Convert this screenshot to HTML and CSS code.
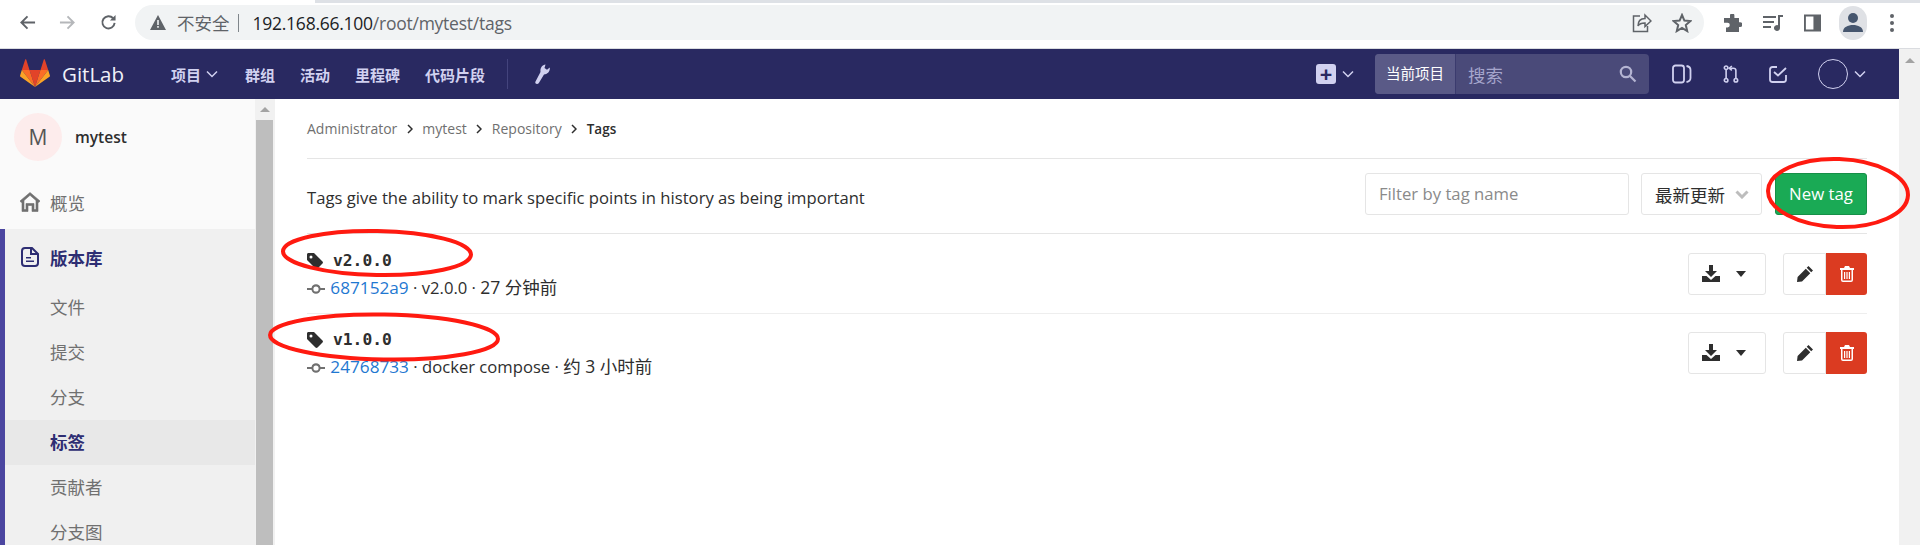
FILE: index.html
```html
<!doctype html>
<html lang="en">

<head>
  <meta charset="UTF-8" />
  <title>Tags · mytest</title>
  <link rel="stylesheet" href="styles.css">
</head>

<body>
  <div class="tab-strip">
    <div class="tab-active"></div>
  </div>

  <div class="toolbar">
    <svg class="tool-icon back" viewBox="0 0 18 18"><path d="M17 9H3M9 2.5 2.5 9 9 15.5" /></svg>
    <svg class="tool-icon forward" viewBox="0 0 18 18"><path d="M1 9h14M9 2.5 15.5 9 9 15.5" /></svg>
    <svg class="tool-icon reload" viewBox="0 0 18 18"><path d="M15.5 9.5a6.5 6.5 0 1 1-1.6-5" /><path class="solid" d="M16.5 1v6h-6z" /></svg>

    <div class="omnibox">
      <svg class="alert-icon" viewBox="0 0 16 15"><path d="M8 0 16 15H0z" /><path class="cut" d="M7.2 5h1.6v5H7.2zM7.2 11h1.6v1.8H7.2z" /></svg>
      <span class="not-secure">不安全</span>
      <span class="omni-sep"></span>
      <span class="url"><b>192.168.66.100</b>/root/mytest/tags</span>
      <svg class="omni-icon share" viewBox="0 0 20 20"><path d="M8 3H1.5v15.500h14V13M6 13c0-5 3-7.500 7-7.500V2l6 6-6 5.500V10c-3 0-5.500 0-7 3z" /></svg>
      <svg class="omni-icon star" viewBox="0 0 20 20"><path d="M10 2l2.400 5.600 6 .5-4.600 4 1.400 6L10 15l-5.200 3.100 1.400-6-4.600-4 6-.5z" /></svg>
    </div>

    <svg class="ext-icon puzzle" viewBox="0 0 18 18"><path d="M6 1.500a2.200 2.200 0 0 1 4.400 0V4H15v4.300h1.200a2.300 2.300 0 0 1 0 4.600H15V18H2v-4.600h1.500a2.300 2.300 0 0 0 0-4.600H0V4h6z" /></svg>
    <svg class="ext-icon music" viewBox="0 0 20 18"><path d="M0 2h13v2H0zM0 7h11v2H0zM0 12h8v2H0zM15 1h5v2h-3v11a3 3 0 1 1-2-2.800z" /></svg>
    <svg class="ext-icon panel" viewBox="0 0 18 18"><path fill-rule="evenodd" d="M0 0h18v18H0zM2 2v14h8V2z" /></svg>
    <div class="profile">
      <svg viewBox="0 0 28 34"><circle cx="14" cy="12" r="5" /><path d="M4 26c0-5 5-7 10-7s10 2 10 7z" /></svg>
    </div>
    <div class="menu-dots"><i></i><i></i><i></i></div>
  </div>

  <div class="viewport">
    <div class="page">
      <header class="navbar">
        <svg class="logo" viewBox="0 0 30 28">
          <path fill="#e24329" d="M15 28 9.500 11h11z" />
          <path fill="#fc6d26" d="M15 28 9.500 11H1.800zM15 28l5.500-17h7.700z" />
          <path fill="#fca326" d="M1.800 11 .1 16.500c-.2.500 0 1 .4 1.300L15 28zM28.200 11l1.700 5.500c.2.500 0 1-.4 1.300L15 28z" />
          <path fill="#e24329" d="M1.800 11H9.500L6.200.5c-.2-.500-.8-.500-1 0zM28.200 11H20.500L23.800.5c.2-.500.8-.500 1 0z" />
        </svg>
        <span class="brand">GitLab</span>

        <ul class="nav-links">
          <li class="nav-project">项目 <svg class="chev" viewBox="0 0 12 8"><path d="M1 1.500 6 6.500l5-5" /></svg></li>
          <li>群组</li>
          <li>活动</li>
          <li>里程碑</li>
          <li>代码片段</li>
        </ul>
        <span class="nav-sep"></span>
        <svg class="wrench" viewBox="0 0 15 20"><path d="M2 20c-1.500 0-2-1-1.600-2.200L5.500 8C5 4 7 1 10.500.5L9.500 4 12 5.800l2.800-2.300C15.200 7.500 12.500 10.300 9 10.500L4 18.800C3.500 19.600 2.800 20 2 20z" /></svg>

        <div class="nav-right">
          <div class="plus-box">+</div>
          <svg class="chev plus-chev" viewBox="0 0 12 8"><path d="M1 1.500 6 6.500l5-5" /></svg>
          <div class="search">
            <span class="search-scope">当前项目</span>
            <span class="search-text">搜索</span>
            <svg class="search-icon" viewBox="0 0 18 18"><circle cx="7" cy="7" r="5.200" /><path d="M11 11l5.500 5.500" /></svg>
          </div>
          <svg class="nav-icon issues" viewBox="0 0 20 20"><rect x="1" y="1.500" width="11" height="17" rx="2.500" /><path d="M14.500 2c3 .5 4 2 4 4v8c0 2-1 3.500-4 4" /></svg>
          <svg class="nav-icon merge" viewBox="0 0 18 20"><circle cx="3.500" cy="3" r="2" /><circle cx="3.500" cy="17" r="2" /><circle cx="14.500" cy="17" r="2" /><path d="M3.500 5v10M14.500 15V6c0-1.500-1-2.500-3-2.500H8" /><path d="M10 1 7 3.500 10 6" /></svg>
          <svg class="nav-icon todo" viewBox="0 0 18 20"><path d="M8 3H3.500C2 3 1 4 1 5.500v10C1 17 2 18 3.500 18h11c1.500 0 2.500-1 2.500-2.500V11" /><path d="M5 8l4 3.500L17 4" /></svg>
          <div class="user-circle"></div>
          <svg class="chev user-chev" viewBox="0 0 12 8"><path d="M1 1.500 6 6.500l5-5" /></svg>
        </div>
      </header>

      <div class="layout">
        <aside class="sidebar">
          <div class="project-head">
            <div class="project-avatar">M</div>
            <span class="project-name">mytest</span>
          </div>
          <div class="side-row">
            <svg class="side-icon" viewBox="0 0 20 19"><path fill="#707070" stroke="#707070" stroke-width=".6" fill-rule="evenodd" d="M10 0 20 8.500 18.800 10 18 9.300V19H12v-6H8v6H2V9.300L1.200 10 0 8.500zM10 2.800 4 8v9h2v-6h8v6h2V8z" /></svg>
            概览
          </div>
          <div class="side-group">
            <div class="side-row group-title">
              <svg class="side-icon" viewBox="0 0 18 20"><path fill="none" stroke="#2e2e73" stroke-width="2" d="M4 1h7l6 6v9a3 3 0 0 1-3 3H4a3 3 0 0 1-3-3V4a3 3 0 0 1 3-3z" /><path fill="#2e2e73" d="M9 1h2v5h6v2H9zM5 10h5v1.500H5zM5 13.500h8V15H5z" /></svg>
              版本库
            </div>
            <div class="side-sub">文件</div>
            <div class="side-sub">提交</div>
            <div class="side-sub">分支</div>
            <div class="side-sub current">标签</div>
            <div class="side-sub">贡献者</div>
            <div class="side-sub">分支图</div>
          </div>
        </aside>

        <div class="side-scroll">
          <div class="side-scroll-arrow"></div>
          <div class="side-scroll-thumb"></div>
        </div>

        <main class="content">
          <nav class="breadcrumbs">
            <span>Administrator</span>
            <svg class="crumb-sep" viewBox="0 0 6 10"><path d="M1 1l4 4-4 4" /></svg>
            <span>mytest</span>
            <svg class="crumb-sep" viewBox="0 0 6 10"><path d="M1 1l4 4-4 4" /></svg>
            <span>Repository</span>
            <svg class="crumb-sep" viewBox="0 0 6 10"><path d="M1 1l4 4-4 4" /></svg>
            <span class="crumb-current">Tags</span>
          </nav>

          <div class="tags-top">
            <p class="tags-desc">Tags give the ability to mark specific points in history as being important</p>
            <div class="filter-input">Filter by tag name</div>
            <div class="sort-select">最新更新 <svg viewBox="0 0 14 9"><path d="M1.500 1.500 7 7l5.500-5.500" /></svg></div>
            <div class="btn-new">New tag</div>
          </div>

          <div class="tag-row">
            <div class="tag-info">
              <div class="tag-name">
                <svg class="tag-icon" viewBox="0 0 16 16"><path fill-rule="evenodd" d="M1.500 0H7l8.500 8.500c.6.600.6 1.400 0 2l-5 5c-.6.600-1.400.6-2 0L0 7V1.500C0 .6.600 0 1.500 0zM4 2.500a1.500 1.500 0 1 0 0 3 1.500 1.500 0 0 0 0-3z" /></svg>
                <span>v2.0.0</span>
              </div>
              <div class="tag-meta">
                <svg class="commit-icon" viewBox="0 0 18 10"><path d="M0 4h4.500a4.600 4.600 0 0 1 9 0H18v2h-4.500a4.600 4.600 0 0 1-9 0H0zM9 2.400a2.600 2.600 0 1 0 0 5.200 2.600 2.600 0 0 0 0-5.200z" fill-rule="evenodd" /></svg>
                <a class="sha">687152a9</a> · v2.0.0 · <span class="time-ago">27 分钟前</span>
              </div>
            </div>
            <div class="row-actions">
              <div class="btn-download">
                <svg class="dl-icon" viewBox="0 0 18 17"><path d="M7 0h4v6h4l-6 6-6-6h4zM0 11h4.500L9 15l4.500-4H18v6H0z" /></svg>
                <span class="caret"></span>
              </div>
              <div class="btn-edit"><svg viewBox="0 0 16 16"><path d="M11.500 0 16 4.500l-1.800 1.800-4.500-4.500zM8.800 2.800l4.500 4.500L5 15.500 0 16l.6-5z" /></svg></div>
              <div class="btn-delete"><svg viewBox="0 0 14 16"><path fill-rule="evenodd" d="M4 2 5 0h4l1 2h4v2h-1v10a2 2 0 0 1-2 2H3a2 2 0 0 1-2-2V4H0V2zM2.500 4v10c0 .4.200.6.500.6h8c.3 0 .5-.2.500-.6V4zM4 6h1.200v7H4zM6.400 6h1.200v7H6.400zM8.800 6H10v7H8.800z" /></svg></div>
            </div>
          </div>

          <div class="tag-row">
            <div class="tag-info">
              <div class="tag-name">
                <svg class="tag-icon" viewBox="0 0 16 16"><path fill-rule="evenodd" d="M1.500 0H7l8.500 8.500c.6.600.6 1.400 0 2l-5 5c-.6.600-1.400.6-2 0L0 7V1.500C0 .6.600 0 1.500 0zM4 2.500a1.500 1.500 0 1 0 0 3 1.500 1.500 0 0 0 0-3z" /></svg>
                <span>v1.0.0</span>
              </div>
              <div class="tag-meta">
                <svg class="commit-icon" viewBox="0 0 18 10"><path d="M0 4h4.500a4.600 4.600 0 0 1 9 0H18v2h-4.500a4.600 4.600 0 0 1-9 0H0zM9 2.400a2.600 2.600 0 1 0 0 5.200 2.600 2.600 0 0 0 0-5.200z" fill-rule="evenodd" /></svg>
                <a class="sha">24768733</a> · docker compose · <span class="time-ago">约 3 小时前</span>
              </div>
            </div>
            <div class="row-actions">
              <div class="btn-download">
                <svg class="dl-icon" viewBox="0 0 18 17"><path d="M7 0h4v6h4l-6 6-6-6h4zM0 11h4.500L9 15l4.500-4H18v6H0z" /></svg>
                <span class="caret"></span>
              </div>
              <div class="btn-edit"><svg viewBox="0 0 16 16"><path d="M11.500 0 16 4.500l-1.800 1.800-4.500-4.500zM8.800 2.800l4.500 4.500L5 15.500 0 16l.6-5z" /></svg></div>
              <div class="btn-delete"><svg viewBox="0 0 14 16"><path fill-rule="evenodd" d="M4 2 5 0h4l1 2h4v2h-1v10a2 2 0 0 1-2 2H3a2 2 0 0 1-2-2V4H0V2zM2.500 4v10c0 .4.200.6.500.6h8c.3 0 .5-.2.500-.6V4zM4 6h1.200v7H4zM6.400 6h1.200v7H6.400zM8.800 6H10v7H8.800z" /></svg></div>
            </div>
          </div>
        </main>
      </div>
    </div>

    <div class="page-scroll">
      <div class="page-scroll-arrow"></div>
    </div>
  </div>

  <!-- red marks someone drew over the screenshot -->
  <svg class="annotations" viewBox="0 0 1920 545">
    <ellipse cx="377" cy="253" rx="94" ry="22" transform="rotate(1 377 253)" />
    <ellipse cx="384" cy="337" rx="114" ry="22.5" transform="rotate(1 384 337)" />
    <ellipse cx="1838" cy="193" rx="70" ry="34" transform="rotate(2 1838 193)" />
  </svg>
</body>

</html>
```

FILE: styles.css
```css
* {
  margin: 0;
  padding: 0;
  box-sizing: border-box;
}

html,
body {
  height: 100%;
  width: 100%;
  overflow: hidden;
}

body {
  font-family: 'Open Sans', 'Noto Sans CJK SC', sans-serif;
  color: #2e2e2e;
  background-color: white;
  display: flex;
  flex-direction: column;
  position: relative;
}

/* browser chrome */
.tab-strip {
  height: 3px;
  background-color: #dee1e6;
  flex-shrink: 0;
}

.tab-active {
  width: 315px;
  height: 3px;
  background-color: white;
}

.toolbar {
  height: 46px;
  flex-shrink: 0;
  display: flex;
  align-items: center;
  padding: 0 0 6px 19px;
  background-color: white;
  border-bottom: 1px solid #dadce0;
}

.tool-icon {
  width: 17px;
  height: 17px;
  fill: none;
  stroke: #5f6368;
  stroke-width: 2;
  flex-shrink: 0;
}

.tool-icon .solid {
  fill: #5f6368;
  stroke: none;
}

.forward {
  margin-left: 23px;
  stroke: #b5b7ba;
}

.reload {
  margin-left: 24px;
}

.omnibox {
  margin-left: 18px;
  flex-basis: 1569px;
  height: 35px;
  border-radius: 18px;
  background-color: #f1f3f4;
  display: flex;
  align-items: center;
  padding-left: 15px;
  flex-shrink: 0;
}

.alert-icon {
  width: 16px;
  height: 15px;
  fill: #5f6368;
}

.alert-icon .cut {
  fill: #f1f3f4;
}

.not-secure {
  margin-left: 11px;
  font-size: 17.5px;
  color: #5f6368;
}

.omni-sep {
  width: 1px;
  height: 18px;
  margin: 0 14px 0 8px;
  background-color: #80868b;
}

.url {
  font-size: 17.5px;
  color: #5f6368;
  letter-spacing: -0.25px;
}

.url b {
  font-weight: 400;
  color: #202124;
}

.omni-icon {
  width: 20px;
  height: 20px;
  fill: none;
  stroke: #5f6368;
  stroke-width: 1.5;
}

.share {
  margin-left: auto;
}

.star {
  margin: 0 12px 0 20px;
  stroke-width: 2;
}

.ext-icon {
  fill: #5f6368;
  flex-shrink: 0;
}

.puzzle {
  margin-left: 20px;
  width: 18px;
  height: 18px;
}

.music {
  margin-left: 21px;
  width: 20px;
  height: 18px;
}

.panel {
  margin-left: 21px;
  width: 17px;
  height: 18px;
}

.profile {
  margin-left: 18px;
  width: 28px;
  height: 34px;
  border-radius: 14px;
  background-color: #dfe1e5;
  flex-shrink: 0;
}

.profile svg {
  width: 28px;
  height: 34px;
  fill: #46566e;
  display: block;
}

.menu-dots {
  margin-left: 23px;
  display: flex;
  flex-direction: column;
  gap: 3px;
}

.menu-dots i {
  width: 4px;
  height: 4px;
  border-radius: 50%;
  background-color: #5f6368;
}

/* page and scrollbars */
.viewport {
  flex: 1;
  display: flex;
  min-height: 0;
}

.page {
  flex: 1;
  min-width: 0;
  display: flex;
  flex-direction: column;
}

.page-scroll {
  width: 21px;
  background-color: #f1f1f1;
  padding-top: 9px;
}

.page-scroll-arrow,
.side-scroll-arrow {
  width: 0;
  height: 0;
  margin: 0 auto;
  border-left: 5px solid transparent;
  border-right: 5px solid transparent;
  border-bottom: 5px solid #a3a3a3;
}

/* gitlab navbar */
.navbar {
  height: 50px;
  flex-shrink: 0;
  display: flex;
  align-items: center;
  padding-left: 20px;
  background-color: #292961;
}

.logo {
  width: 30px;
  height: 28px;
  margin-bottom: 2px;
}

.brand {
  margin-left: 12px;
  font-size: 20.5px;
  color: #f0f0f8;
}

.nav-links {
  display: flex;
  list-style: none;
  margin-left: 47px;
  gap: 25px;
  font-size: 15px;
  font-weight: 700;
  color: #d1d1f0;
}

.nav-project {
  display: flex;
  align-items: center;
  gap: 5px;
  margin-right: 2px;
}

.chev {
  width: 12px;
  height: 8px;
  fill: none;
  stroke: #d1d1f0;
  stroke-width: 1.5;
}

.nav-sep {
  width: 1px;
  height: 30px;
  margin-left: 22px;
  background-color: #44447d;
}

.wrench {
  margin-left: 27px;
  width: 15px;
  height: 20px;
  fill: #d1d1f0;
}

.nav-right {
  margin-left: auto;
  display: flex;
  align-items: center;
  padding-right: 33px;
}

.plus-box {
  width: 20px;
  height: 20px;
  border-radius: 3px;
  background-color: #d1d1f0;
  color: #292961;
  font-size: 22px;
  font-weight: 700;
  line-height: 18px;
  text-align: center;
}

.plus-chev {
  margin-left: 6px;
}

.search {
  margin-left: 21px;
  width: 274px;
  height: 40px;
  border-radius: 4px;
  background-color: #4a4a79;
  display: flex;
  align-items: center;
  padding-right: 12px;
}

.search-scope {
  width: 81px;
  height: 40px;
  line-height: 40px;
  padding-left: 11px;
  border-radius: 4px 0 0 4px;
  border-right: 1px solid #3b3b6e;
  background-color: #5a5a87;
  color: white;
  font-size: 14.5px;
}

.search-text {
  margin-left: 12px;
  font-size: 17.5px;
  color: #a5a5cc;
}

.search-icon {
  margin-left: auto;
  width: 18px;
  height: 18px;
  fill: none;
  stroke: #b4b4d2;
  stroke-width: 2.2;
}

.nav-icon {
  fill: none;
  stroke: #d1d1f0;
  stroke-width: 1.8;
  flex-shrink: 0;
}

.issues {
  margin-left: 23px;
  width: 20px;
  height: 20px;
}

.merge {
  margin-left: 31px;
  width: 16px;
  height: 20px;
}

.todo {
  margin-left: 30px;
  width: 18px;
  height: 20px;
}

.user-circle {
  margin-left: 31px;
  width: 30px;
  height: 30px;
  border-radius: 50%;
  border: 1px solid #d1d1f0;
}

.user-chev {
  margin-left: 6px;
}

/* main layout */
.layout {
  flex: 1;
  min-height: 0;
  display: flex;
}

.sidebar {
  width: 255px;
  flex-shrink: 0;
  background-color: #fafafa;
  overflow: hidden;
  font-size: 17.5px;
  color: #707070;
}

.project-head {
  height: 76px;
  display: flex;
  align-items: center;
  padding: 0 0 0 14px;
}

.project-avatar {
  width: 48px;
  height: 48px;
  border-radius: 50%;
  background-color: #fdecec;
  color: #555;
  font-size: 21px;
  line-height: 48px;
  text-align: center;
}

.project-name {
  margin-left: 13px;
  font-size: 15.5px;
  font-weight: 600;
  color: #2e2e2e;
}

.side-row {
  height: 54px;
  display: flex;
  align-items: center;
  padding: 0 0 0 20px;
}

.side-icon {
  width: 20px;
  height: 20px;
  margin-right: 10px;
  flex-shrink: 0;
}

.side-group {
  background-color: #f0f0f0;
  border-left: 5px solid #4b46a0;
}

.group-title {
  height: 56px;
  padding-left: 15px;
  font-weight: 700;
  color: #2e2e73;
}

.side-sub {
  height: 45px;
  line-height: 45px;
  padding-left: 45px;
}

.side-sub.current {
  background-color: #e8e8e8;
  font-weight: 700;
  color: #2e2e73;
}

.side-scroll {
  width: 20px;
  flex-shrink: 0;
  background-color: #f1f1f1;
  padding: 8px 2px 0 1px;
}

.side-scroll-thumb {
  height: 430px;
  margin-top: 8px;
  background-color: #bebebe;
}

.content {
  flex: 1;
  min-width: 0;
  padding: 0 32px;
  background-color: white;
}

.breadcrumbs {
  height: 60px;
  display: flex;
  align-items: center;
  gap: 9.5px;
  border-bottom: 1px solid #e5e5e5;
  font-size: 14px;
  color: #707070;
}

.crumb-sep {
  width: 6px;
  height: 10px;
  fill: none;
  stroke: #2e2e2e;
  stroke-width: 1.5;
}

.crumb-current {
  color: #2e2e2e;
  font-weight: 600;
  font-size: 13.5px;
}

.tags-top {
  height: 75px;
  display: flex;
  align-items: center;
  padding-bottom: 4px;
  border-bottom: 1px solid #e5e5e5;
}

.tags-desc {
  flex: 1;
  margin-top: 6px;
  font-size: 16.65px;
}

.filter-input {
  width: 264px;
  height: 42px;
  line-height: 40px;
  padding-left: 13px;
  border: 1px solid #e5e5e5;
  border-radius: 3px;
  color: #8a8a8a;
  font-size: 16.7px;
}

.sort-select {
  margin-left: 12px;
  width: 121px;
  height: 42px;
  padding-left: 13px;
  display: flex;
  align-items: center;
  gap: 10px;
  border: 1px solid #e5e5e5;
  border-radius: 3px;
  font-size: 17.5px;
}

.sort-select svg {
  width: 14px;
  height: 9px;
  fill: none;
  stroke: #bdbdbd;
  stroke-width: 3;
}

.btn-new {
  margin-left: 13px;
  width: 92px;
  height: 42px;
  line-height: 40px;
  text-align: center;
  border: 1px solid #168f48;
  border-radius: 3px;
  background-color: #1aaa55;
  color: white;
  font-size: 16.8px;
}

.tag-row {
  height: 80px;
  display: flex;
  align-items: center;
  justify-content: space-between;
  border-bottom: 1px solid #eee;
}

.tag-row:last-child {
  height: 77px;
  border-bottom: none;
}

.tag-info {
  padding-top: 1px;
}

.tag-name {
  display: flex;
  align-items: center;
  height: 27px;
}

.tag-icon {
  width: 16px;
  height: 16px;
  fill: #2e2e2e;
  margin-right: 10px;
}

.tag-name span {
  font-family: 'DejaVu Sans Mono', monospace;
  font-size: 16.3px;
  font-weight: 700;
}

.tag-meta {
  height: 27px;
  line-height: 27px;
  font-size: 16.65px;
  white-space: nowrap;
}

.time-ago {
  font-size: 17.5px;
}

.commit-icon {
  width: 18px;
  height: 10px;
  margin-right: 1px;
  fill: #707070;
}

.sha {
  color: #1f78d1;
  font-size: 17.2px;
}

.row-actions {
  display: flex;
  align-items: center;
}

.btn-download {
  width: 78px;
  height: 42px;
  display: flex;
  align-items: center;
  padding-left: 13px;
  gap: 16px;
  border: 1px solid #e5e5e5;
  border-radius: 3px;
}

.dl-icon {
  width: 18px;
  height: 17px;
  fill: #2e2e2e;
}

.caret {
  width: 0;
  height: 0;
  border-left: 5.5px solid transparent;
  border-right: 5.5px solid transparent;
  border-top: 6px solid #2e2e2e;
}

.btn-edit {
  margin-left: 17px;
  width: 43px;
  height: 42px;
  display: flex;
  align-items: center;
  justify-content: center;
  border: 1px solid #e5e5e5;
  border-radius: 3px 0 0 3px;
}

.btn-edit svg {
  width: 16px;
  height: 16px;
  fill: #2e2e2e;
}

.btn-delete {
  width: 41px;
  height: 42px;
  display: flex;
  align-items: center;
  justify-content: center;
  background-color: #db3b21;
  border-radius: 0 3px 3px 0;
}

.btn-delete svg {
  width: 14px;
  height: 16px;
  fill: white;
}

.annotations {
  position: absolute;
  top: 0;
  left: 0;
  width: 1920px;
  height: 545px;
  pointer-events: none;
}

.annotations ellipse {
  fill: none;
  stroke: #ff1a10;
  stroke-width: 4;
}
```
